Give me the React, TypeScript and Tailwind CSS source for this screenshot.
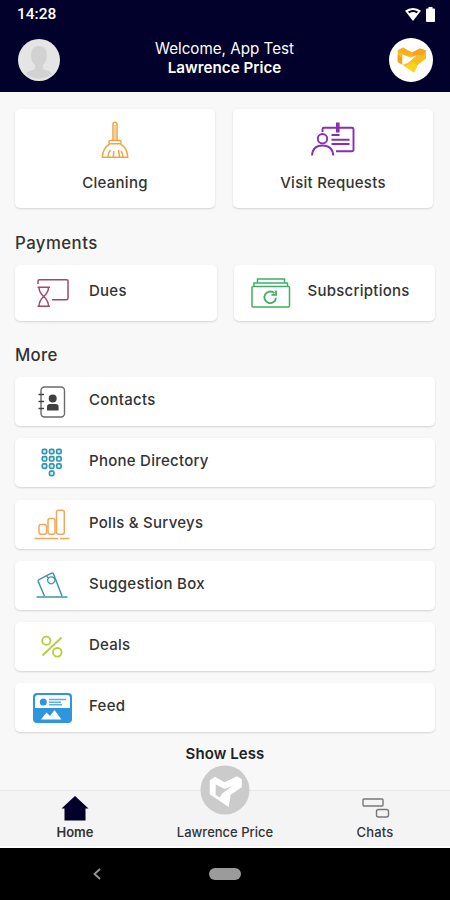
import type { ReactNode } from "react";

const CleaningIcon = () => (
  <svg width="28" height="38" viewBox="0 0 28 38" fill="none" stroke="#eda544" strokeWidth="1.5" strokeLinejoin="round">
    <path d="M12 20V3.200a2 2 0 0 1 4 0V20" />
    <path d="M14 4v15" strokeWidth="1" />
    <path d="M9.500 19.500h9a1.600 1.600 0 0 1 0 3.300h-9a1.600 1.600 0 0 1 0-3.300zM8.500 22.800C4.500 25.500 1.600 30 1.200 36.200h25.600c-.4-6.200-3-10.700-7.300-13.400" />
    <path d="M7 36c0-3 1-5.200 2.500-7M12.300 36l.5-6M17.500 29l1 7M22 36c0-2.500-.7-4.500-2-6" />
  </svg>
);

const VisitIcon = () => (
  <svg width="44" height="36" viewBox="0 0 44 36" fill="none" stroke="#8a2db5" strokeWidth="1.900">
    <path d="M11.500 10V7.200a1.500 1.500 0 0 1 1.500-1.500h28a1.500 1.500 0 0 1 1.500 1.500v20.600a1.500 1.500 0 0 1-1.500 1.500H25" />
    <path d="M26.800.5v10" strokeWidth="3.600" />
    <path d="M20.500 13h8M20.500 17.800h18M20.500 22h18" />
    <circle cx="11.500" cy="16.700" r="4.700" />
    <path d="M1 33.500c.5-7 4.600-10 10.500-10s10.200 3 10.800 10" />
  </svg>
);

const DuesIcon = () => (
  <svg width="32" height="30" viewBox="0 0 32 30" fill="none" stroke="#a5476b" strokeWidth="1.500">
    <path d="M1 6V3.200A1.500 1.500 0 0 1 2.500 1.700h27A1.500 1.500 0 0 1 31 3.200v17a1.500 1.500 0 0 1-1.500 1.500H15" />
    <path d="M.5 9.200h12.500M.5 28.200h12.500M2 9.200c0 5 2.200 7 4.700 9.300C4.200 20.800 2 23 2 28.200M11.500 9.200c0 5-2.200 7-4.800 9.300 2.600 2.300 4.800 4.500 4.800 9.700" />
  </svg>
);

const SubscriptionsIcon = () => (
  <svg width="40" height="30" viewBox="0 0 40 30" fill="none" stroke="#3fae66" strokeWidth="1.500">
    <rect x="1" y="8.500" width="37.500" height="20.500" rx="1" />
    <path d="M3 8.500V5h33.500v3.500M6.500 5V1h27v4" />
    <path d="M23.300 15.200a5.800 5.800 0 1 0 1.700 4.500M25 12.500v4.300h-4.500" strokeWidth="1.800" />
  </svg>
);

const ContactsIcon = () => (
  <svg width="28" height="32" viewBox="0 0 28 32" fill="none" stroke="#6a6a6a" strokeWidth="1.400">
    <rect x="3" y="1" width="23.500" height="30" rx="3.500" />
    <path d="M.5 8.500H6M.5 15.500H6M.5 22.500H6" stroke="#444" />
    <circle cx="14.700" cy="12.500" r="4" fill="#404040" stroke="none" />
    <path d="M9 24.500v-3.500a3 3 0 0 1 3-3h5.600a3 3 0 0 1 3 3v3.500z" fill="#404040" stroke="none" />
  </svg>
);

const keys = [
  [3.5, 3.5], [10.7, 3.5], [17.9, 3.5],
  [3.5, 10.8], [10.7, 10.8], [17.9, 10.8],
  [3.5, 18.1], [10.7, 18.1], [17.9, 18.1],
  [10.7, 25.4],
];

const PhoneIcon = () => (
  <svg width="22" height="29" viewBox="0 0 22 29" fill="#d9f0f4" stroke="#3297ac" strokeWidth="1.700">
    {keys.map(([x, y]) => (
      <rect key={`${x}-${y}`} x={x - 2.2} y={y - 2.2} width="4.400" height="4.400" rx="1.300" />
    ))}
  </svg>
);

const PollsIcon = () => (
  <svg width="36" height="31" viewBox="0 0 36 31" fill="none" stroke="#f0a85c" strokeWidth="1.500">
    <rect x="5" y="15.500" width="7.500" height="9.800" rx="2" />
    <rect x="14" y="9.500" width="7" height="15.800" rx="2" />
    <rect x="22.500" y="1.200" width="7.800" height="24.100" rx="2" />
    <path d="M.5 29.500H24M26 29.500h9.500" />
  </svg>
);

const SuggestionIcon = () => (
  <svg width="32" height="26" viewBox="0 0 32 26" fill="none" stroke="#3f95a6" strokeWidth="1.500">
    <path d="M.5 25h31M8.500 24 2.200 9.500a1.500 1.500 0 0 1 .8-1.900L15.500 1.200a1.500 1.500 0 0 1 2 .8L26 24" />
    <path d="M17.500 5.500a3.500 3.500 0 1 1-5 .5c1-1.200 3.500-1.500 5-.5zM12.500 6l-2-2" strokeWidth="1.300" />
  </svg>
);

const DealsIcon = () => (
  <svg width="22" height="23" viewBox="0 0 22 23" fill="none" stroke="#b0cf38" strokeWidth="1.800">
    <circle cx="5.300" cy="5.700" r="4.100" />
    <circle cx="16.300" cy="17.300" r="4.300" />
    <path d="M20.500 2.500 1.500 20.500" />
  </svg>
);

const FeedIcon = () => (
  <svg width="39" height="30" viewBox="0 0 39 30">
    <rect width="39" height="30" rx="4" fill="#2e96dc" />
    <path d="M2 5a3 3 0 0 1 3-3h29a3 3 0 0 1 3 3v10H2z" fill="#fff" />
    <circle cx="10.300" cy="9" r="3.500" fill="#2e96dc" />
    <path d="M16 6.500h17M16 9.200h12M16 11.800h13" stroke="#5eaee5" strokeWidth="1.500" />
    <path d="m8 26.500 5.500-7 3.500 3.500 4.500-6 7 9.500z" fill="#fff" />
  </svg>
);

const Card = ({ children, className = "" }: { children: ReactNode; className?: string }) => (
  <div className={`bg-white rounded-[5px] shadow-[0_1px_2px_rgba(0,0,0,0.15)] ${className}`}>{children}</div>
);

const Label = ({ children }: { children: ReactNode }) => (
  <span className="block text-[15px] leading-[22px] font-medium tracking-[0.26px]">{children}</span>
);

const rows = [
  { label: "Contacts", icon: <ContactsIcon /> },
  { label: "Phone Directory", icon: <PhoneIcon /> },
  { label: "Polls & Surveys", icon: <PollsIcon /> },
  { label: "Suggestion Box", icon: <SuggestionIcon /> },
  { label: "Deals", icon: <DealsIcon /> },
  { label: "Feed", icon: <FeedIcon /> },
];

export default function App() {
  return (
    <div className="w-[450px] h-[900px] flex flex-col overflow-hidden bg-[#f8f8f8] font-['Inter',sans-serif] text-[#333] whitespace-nowrap">
      <header className="h-[92px] shrink-0 bg-[#01012b] text-white">
        <div className="h-7 flex items-center justify-between pl-[17px] pr-[15px]">
          <span className="font-['Roboto',sans-serif] font-medium text-[15.500px] leading-7">14:28</span>
          <div className="flex items-center gap-[5px]">
            <svg width="16" height="15" viewBox="0 0 16 15">
              <path d="M0 3.800a12.500 12.500 0 0 1 16 0L8 14z" fill="#fff" />
              <path d="M3 4.600a9 9 0 0 1 10 0L11.700 6.200a7 7 0 0 0-7.400 0z" fill="#01012b" />
            </svg>
            <svg width="9" height="15" viewBox="0 0 9 15" fill="#fff">
              <path d="M2.500 0h4v1.500H8a1 1 0 0 1 1 1V14a1 1 0 0 1-1 1H1a1 1 0 0 1-1-1V2.500a1 1 0 0 1 1-1h1.500z" />
            </svg>
          </div>
        </div>
        <div className="h-16 flex items-center justify-between pl-[18px] pr-[17px]">
          <svg width="42" height="42" viewBox="0 0 42 42">
            <circle cx="21" cy="21" r="21" fill="#e5e5e5" />
            <path d="M21 7c-5.500 0-8 4-8 9.500 0 4 1.500 7.500 4 9.500v4c-3 1.500-7 1.500-9 5a20.500 20.500 0 0 0 26 0c-2-3.500-6-3.500-9-5v-4c2.500-2 4-5.500 4-9.500C29 11 26.500 7 21 7z" fill="#d2d2d2" />
          </svg>
          <div className="text-center text-[15.200px] leading-[18.500px] pb-[3px]">
            <div>Welcome, App Test</div>
            <div className="font-semibold">Lawrence Price</div>
          </div>
          <svg width="44" height="44" viewBox="0 0 44 44">
            <circle cx="22" cy="22" r="22" fill="#fff" />
            <path d="m8.700 12.500 5.300-3 9 5 8-4 6 2v8l-7.800 6-1 1.500-3.200 6.500-9.500-6.500-6.800-4z" fill="#f9bd22" />
            <path d="m8.700 12.500 5.300-3 9 5-3.300 3-6-2z" fill="#f6ae24" />
            <path d="m8.700 17 4.600 3v6.500l-4.600-2.500z" fill="#f3a01c" />
            <path d="m23 14.500 8-4 6 2-3 5-5.500-.5-5 1z" fill="#f4a51d" />
            <path d="m25 24 3.200 4-3.200 6.500-9.500-6.500z" fill="#fbd51d" />
            <path d="m13.300 16.500 8 3 6-2-6.500 6-2 1.500-5.500 2z" fill="#fff" />
          </svg>
        </div>
      </header>

      <main className="h-[698px] shrink-0 px-[15px] pt-[17px]">
        <div className="flex gap-[18px] pr-0.5">
          <Card className="flex-1 h-[99px] flex flex-col items-center justify-between pt-3 pb-3.5">
            <CleaningIcon />
            <Label>Cleaning</Label>
          </Card>
          <Card className="flex-1 h-[99px] flex flex-col items-center justify-between pt-[13px] pb-3.5">
            <VisitIcon />
            <Label>Visit Requests</Label>
          </Card>
        </div>

        <h2 className="mt-[23px] h-6 text-[16.800px] leading-6 font-medium tracking-[0.450px]">Payments</h2>
        <div className="mt-2.5 flex gap-[17px]">
          <Card className="flex-1 h-14 flex items-center">
            <div className="w-[74px] pl-[22px]"><DuesIcon /></div>
            <div className="pb-1"><Label>Dues</Label></div>
          </Card>
          <Card className="flex-1 h-14 flex items-center">
            <div className="w-[74px] pl-[17px]"><SubscriptionsIcon /></div>
            <div className="pb-1"><Label>Subscriptions</Label></div>
          </Card>
        </div>

        <h2 className="mt-[22px] h-6 text-[16.800px] leading-6 font-medium tracking-[0.300px]">More</h2>
        <div className="mt-2.5 flex flex-col gap-[12.300px]">
          {rows.map((row) => (
            <Card key={row.label} className="h-[49px] flex items-center">
              <div className="w-[74px] flex justify-center">{row.icon}</div>
              <div className="pb-[3px]"><Label>{row.label}</Label></div>
            </Card>
          ))}
        </div>
        <div className="mt-[11px] text-center text-[15px] leading-[22px] font-semibold tracking-[0.080px] text-[#222]">Show Less</div>
      </main>

      <nav className="relative h-[58px] shrink-0 grid grid-cols-3 bg-[#f4f4f4] border-t border-[#eaeaea] border-b-2 border-b-white text-[13px] leading-4 font-medium text-center">
        <div className="flex flex-col items-center justify-end pb-1.5 font-semibold">
          <svg width="28" height="25" viewBox="0 0 28 25" className="mb-[3px]">
            <path d="M14 0 27.500 12.500H24.500V24.500H3.500V12.500H.5z" fill="#01012b" />
          </svg>
          Home
        </div>
        <div className="flex flex-col justify-end pb-1.5">Lawrence Price</div>
        <div className="flex flex-col items-center justify-end pb-1.5 tracking-[0.200px]">
          <svg width="28" height="20" viewBox="0 0 28 20" fill="none" stroke="#777" strokeWidth="1.400" className="mb-1.5 ml-0.5">
            <rect x="1" y="1" width="20" height="7" rx="1" />
            <rect x="14.500" y="11.500" width="12" height="7.500" rx="2" />
          </svg>
          Chats
        </div>
        <svg width="50" height="50" viewBox="0 0 50 50" className="absolute left-[200px] -top-[26px]">
          <circle cx="25" cy="25" r="24.500" fill="#cbcbcb" />
          <path d="m9.700 15.300 5.300-3.500 9.500 5.500 12.500-6 4.800 3v8l-11.100 7.400-2 12.300-19-12.700z" fill="#fff" />
          <path d="m15.700 19.500 9 4.500 7.500-3-10 7.500-2.500 4-4-2.500z" fill="#cbcbcb" />
        </svg>
      </nav>

      <footer className="relative flex-1 bg-black flex justify-center items-center">
        <svg width="8" height="12" viewBox="0 0 8 12" fill="none" stroke="#999" strokeWidth="1.800" className="absolute left-[93px] top-5">
          <path d="M7 1 1.500 6 7 11" />
        </svg>
        <div className="w-8 h-3 rounded-full bg-[#9b9b9b]" />
      </footer>
    </div>
  );
}
